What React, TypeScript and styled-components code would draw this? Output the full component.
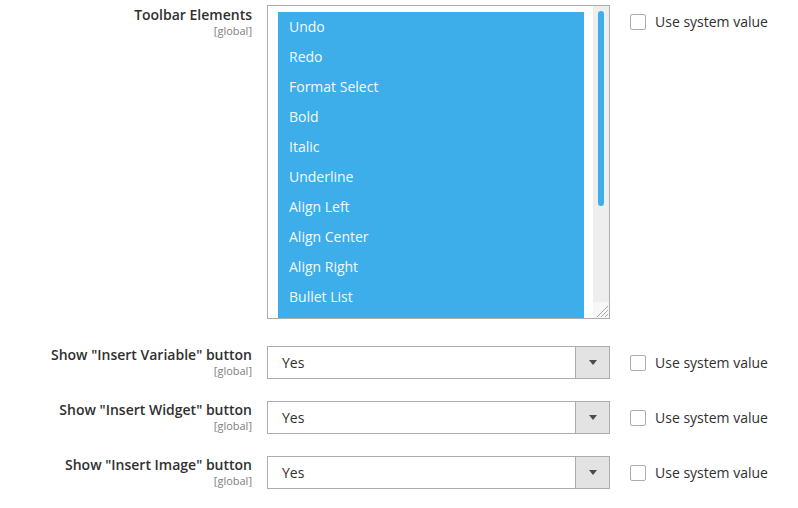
import React from 'react';
import styled, { createGlobalStyle } from 'styled-components';

const GlobalStyle = createGlobalStyle`
  body {
    margin: 0;
    background: #ffffff;
    font-family: "Open Sans", "DejaVu Sans", sans-serif;
    color: #303030;
  }
`;

const Form = styled.div`
  display: flex;
  flex-direction: column;
  gap: 22px;
  padding-top: 5px;
`;

const Row = styled.div<{ $extra?: number }>`
  display: flex;
  align-items: flex-start;
  margin-bottom: ${p => p.$extra || 0}px;
`;

const LabelCol = styled.div<{ $offset?: number }>`
  width: 252px;
  text-align: right;
  padding-top: ${p => p.$offset || 0}px;
  margin-right: 15px;
  flex-shrink: 0;
`;

const Label = styled.div`
  font-size: 14px;
  font-weight: 600;
  line-height: 18px;
  color: #303030;
`;

const Scope = styled.div`
  font-size: 11px;
  line-height: 14px;
  color: #808080;
`;

const MultiSelect = styled.div`
  position: relative;
  width: 343px;
  height: 314px;
  box-sizing: border-box;
  border: 1px solid #adadad;
  display: flex;
  overflow: hidden;
`;

const OptionList = styled.div`
  flex: 1;
  display: flex;
  flex-direction: column;
  padding: 6px 9px 0 10px;
`;

const Options = styled.div`
  flex: 1;
  background: #3daee9;
`;

const Option = styled.div`
  height: 30px;
  line-height: 30px;
  padding-left: 11px;
  color: #f4faff;
  font-size: 14px;
`;

const Track = styled.div`
  width: 16px;
  background: #eeeeee;
  position: relative;
  margin-bottom: 15px;
`;

const Thumb = styled.div`
  position: absolute;
  left: 5px;
  top: 5px;
  width: 6px;
  height: 195px;
  border-radius: 3px;
  background: #3daee9;
`;

const Grip = styled.svg`
  position: absolute;
  right: 0;
  bottom: 0;
  background: #f7f7f7;
`;

const Select = styled.div`
  width: 343px;
  height: 33px;
  box-sizing: border-box;
  border: 1px solid #adadad;
  display: flex;
  align-items: stretch;
`;

const SelectValue = styled.div`
  flex: 1;
  padding: 1px 0 0 14px;
  font-size: 14px;
  line-height: 30px;
  color: #303030;
`;

const SelectArrow = styled.div`
  width: 33px;
  background: #e3e3e3;
  border-left: 1px solid #adadad;
  display: flex;
  align-items: center;
  justify-content: center;

  &::after {
    content: '';
    border-left: 4px solid transparent;
    border-right: 4px solid transparent;
    border-top: 5px solid #514943;
  }
`;

const UseSystem = styled.label`
  display: flex;
  align-items: center;
  gap: 9px;
  margin-left: 20px;
  padding-top: 8px;
  font-size: 14px;
  line-height: 18px;
  color: #303030;
`;

const Box = styled.span`
  width: 16px;
  height: 16px;
  box-sizing: border-box;
  border: 1px solid #adadad;
  border-radius: 2px;
  background: #fff;
`;

const toolbarItems = [
  'Undo',
  'Redo',
  'Format Select',
  'Bold',
  'Italic',
  'Underline',
  'Align Left',
  'Align Center',
  'Align Right',
  'Bullet List',
];

const buttons = ['Insert Variable', 'Insert Widget', 'Insert Image'];

const SystemValue: React.FC = () => (
  <UseSystem>
    <Box />
    Use system value
  </UseSystem>
);

const App: React.FC = () => {
  return (
    <>
      <GlobalStyle />
      <Form>
        <Row $extra={5}>
          <LabelCol $offset={1}>
            <Label>Toolbar Elements</Label>
            <Scope>[global]</Scope>
          </LabelCol>
          <MultiSelect>
            <OptionList>
              <Options>
                {toolbarItems.map(item => (
                  <Option key={item}>{item}</Option>
                ))}
              </Options>
            </OptionList>
            <Track>
              <Thumb />
            </Track>
            <Grip width="16" height="16" viewBox="0 0 16 16">
              <path d="M15 4 L4 15 M15 8 L8 15 M15 12 L12 15" stroke="#a8a8a8" strokeWidth="1" />
            </Grip>
          </MultiSelect>
          <SystemValue />
        </Row>

        {buttons.map(name => (
          <Row key={name}>
            <LabelCol>
              <Label>Show "{name}" button</Label>
              <Scope>[global]</Scope>
            </LabelCol>
            <Select>
              <SelectValue>Yes</SelectValue>
              <SelectArrow />
            </Select>
            <SystemValue />
          </Row>
        ))}
      </Form>
    </>
  );
};

export default App;
